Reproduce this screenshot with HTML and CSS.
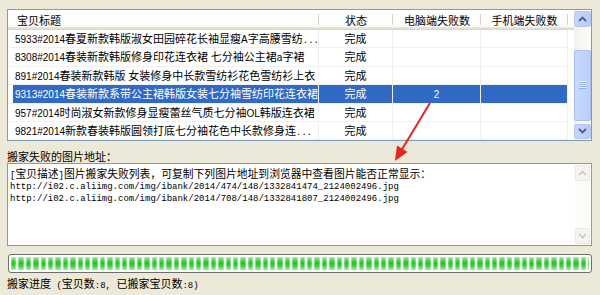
FILE: index.html
```html
<!DOCTYPE html>
<html lang="zh-CN">
<head>
    <meta charset="UTF-8">
    <meta name="viewport" content="width=device-width, initial-scale=1.0">
    <title>图片搬家</title>
    <link rel="stylesheet" href="styles.css">
</head>
<body>
<div class="window">
    <div class="list">
        <table class="grid">
            <colgroup>
                <col class="c-title">
                <col class="c-state">
                <col class="c-pc">
                <col class="c-mob">
                <col>
            </colgroup>
            <thead>
                <tr>
                    <th class="title">宝贝标题</th>
                    <th>状态</th>
                    <th>电脑端失败数</th>
                    <th>手机端失败数</th>
                    <th class="rest"></th>
                </tr>
            </thead>
            <tbody>
                <tr>
                    <td class="title"><span class="a">5933#2014</span>春夏新款韩版淑女田园碎花长袖显瘦<span class="a">A</span>字高腰雪纺<span class="m">...</span></td>
                    <td>完成</td><td></td><td></td><td class="rest"></td>
                </tr>
                <tr>
                    <td class="title"><span class="a">8308#2014</span>春装新款韩版修身印花连衣裙<span class="a"> </span>七分袖公主裙<span class="a">a</span>字裙</td>
                    <td>完成</td><td></td><td></td><td class="rest"></td>
                </tr>
                <tr>
                    <td class="title"><span class="a">891#2014</span>春装新款韩版<span class="a"> </span>女装修身中长款雪纺衫花色雪纺衫上衣</td>
                    <td>完成</td><td></td><td></td><td class="rest"></td>
                </tr>
                <tr class="sel">
                    <td class="title"><span class="a">9313#2014</span>春装新款系带公主裙韩版女装七分袖雪纺印花连衣裙</td>
                    <td>完成</td><td><span class="a">2</span></td><td></td><td class="rest"></td>
                </tr>
                <tr>
                    <td class="title"><span class="a">957#2014</span>时尚淑女新款修身显瘦蕾丝气质七分袖<span class="a">OL</span>韩版连衣裙</td>
                    <td>完成</td><td></td><td></td><td class="rest"></td>
                </tr>
                <tr>
                    <td class="title"><span class="a">9821#2014</span>新款春装韩版圆领打底七分袖花色中长款修身连<span class="m">...</span></td>
                    <td>完成</td><td></td><td></td><td class="rest"></td>
                </tr>
            </tbody>
        </table>
        <div class="vscroll">
            <div class="sbtn">
                <svg width="9" height="6" viewBox="0 0 9 6"><path d="M1 5 L4.5 1.5 L8 5" fill="none" stroke="#4d6185" stroke-width="1.8"/></svg>
            </div>
            <div class="track">
                <div class="thumb"><div class="grip"></div></div>
            </div>
            <div class="sbtn">
                <svg width="9" height="6" viewBox="0 0 9 6"><path d="M1 1 L4.5 4.5 L8 1" fill="none" stroke="#4d6185" stroke-width="1.8"/></svg>
            </div>
        </div>
    </div>

    <div class="label">搬家失败的图片地址：</div>

    <div class="memo">
        <div class="memo-text">
            <div><span class="m">[</span>宝贝描述<span class="m">]</span>图片搬家失败列表，可复制下列图片地址到浏览器中查看图片能否正常显示：</div>
            <div class="m">http://i02.c.aliimg.com/img/ibank/2014/474/148/1332841474_2124002496.jpg</div>
            <div class="m">http://i02.c.aliimg.com/img/ibank/2014/708/148/1332841807_2124002496.jpg</div>
        </div>
        <div class="vscroll off">
            <div class="sbtn">
                <svg width="9" height="6" viewBox="0 0 9 6"><path d="M1 5 L4.5 1.5 L8 5" fill="none" stroke="#c9c7ba" stroke-width="1.6"/></svg>
            </div>
            <div class="track"></div>
            <div class="sbtn">
                <svg width="9" height="6" viewBox="0 0 9 6"><path d="M1 1 L4.5 4.5 L8 1" fill="none" stroke="#c9c7ba" stroke-width="1.6"/></svg>
            </div>
        </div>
    </div>

    <div class="progress"><div class="fill"></div></div>

    <div class="status">搬家进度<span class="m"> (</span>宝贝数<span class="m">:8, </span>已搬家宝贝数<span class="m">:8)</span></div>

    <svg class="arrow" width="600" height="295" viewBox="0 0 600 295">
        <line x1="430" y1="103" x2="401" y2="151" stroke="#e3261f" stroke-width="2"/>
        <polygon points="395,161 397,145.5 407.5,152" fill="#e3261f"/>
    </svg>
</div>
</body>
</html>
```

FILE: styles.css
```css
body{
  margin: 0;
  background-color: #ece9d8;
  font: 11px "Noto Sans CJK SC", sans-serif;
  color: #000;
}

.window{
  position: relative;
  padding: 9px 8px 0 7px;
}

/* ascii bits */
.a{
  font-family: "Liberation Sans", sans-serif;
  font-size: 10px;
}
.m{
  font-family: "Liberation Mono", monospace;
  font-size: 9px;
}
span.a, span.m{
  line-height: 1;
}

.list{
  display: flex;
  box-sizing: border-box;
  height: 132px;
  border: 1px solid #7f9db9;
  background-color: #fff;
  overflow: hidden;
}

.grid{
  width: 566px;
  flex: none;
  align-self: flex-start;
  table-layout: fixed;
  border-collapse: separate;
  border-spacing: 0;
}

.c-title{ width: 311px; }
.c-state{ width: 74px; }
.c-pc{ width: 88px; }
.c-mob{ width: 87px; }

.grid th{
  position: relative;
  height: 20px;
  padding: 0;
  font-weight: normal;
  line-height: 20px;
  text-align: center;
  white-space: nowrap;
  background: linear-gradient(#fff 0, #fcfcfb 17px, #ebeadb 17px, #e2decd 19px, #d6d2c2 20px);
}

.grid th::after{
  content: "";
  position: absolute;
  right: 0;
  top: 4px;
  bottom: 5px;
  width: 1px;
  background-color: #d6d2c2;
}

.grid th.rest::after{
  display: none;
}

.grid th.title{
  text-align: left;
  padding-left: 9px;
}

.grid td{
  height: 17.4px;
  padding: 0;
  line-height: 17.4px;
  text-align: center;
  white-space: nowrap;
  overflow: hidden;
  border-right: 1px solid #f0f0f0;
  border-bottom: 1px solid #f0f0f0;
}

.grid td.title{
  text-align: left;
  padding-left: 7px;
  text-overflow: clip;
}

.grid td.rest{
  border: none;
}

.grid tr.sel td{
  background-color: #316ac5;
  color: #fff;
}

.grid tr.sel td.title{
  background: linear-gradient(90deg, #fff 5px, #316ac5 5px);
}

.grid tr.sel td.rest{
  background: #fff;
}

/* xp scrollbar */
.vscroll{
  display: flex;
  flex-direction: column;
  width: 17px;
  background: linear-gradient(90deg, #f3f1ec, #fefefb);
}

.sbtn{
  display: flex;
  align-items: center;
  justify-content: center;
  box-sizing: border-box;
  height: 17px;
  margin: 1px 0;
  border: 1px solid #b7c9f3;
  border-radius: 2px;
  background: linear-gradient(90deg, #c6d5fc, #b9cbf7);
}

.track{
  flex: 1;
  display: flex;
  flex-direction: column;
  padding: 22px 0 2px;
}

.thumb{
  display: flex;
  align-items: center;
  justify-content: center;
  box-sizing: border-box;
  height: 71px;
  border: 1px solid #a9bdf0;
  border-radius: 2px;
  background: linear-gradient(90deg, #c9d8fd, #bcd0fa);
}

.grip{
  width: 7px;
  height: 8px;
  background: repeating-linear-gradient(#eef4fe 0 1px, #8cb0f8 1px 2px);
}

.label{
  margin-top: 9px;
  line-height: 12px;
  margin-bottom: 1px;
}

.memo{
  display: flex;
  box-sizing: border-box;
  height: 83px;
  border: 1px solid #7f9db9;
  background-color: #fff;
}

.memo-text{
  flex: 1;
  padding: 3px 0 0 2px;
  font-size: 10.8px;
  line-height: 12px;
  white-space: nowrap;
}

.memo .vscroll{
  width: 15px;
  margin-right: 1px;
}

.vscroll.off{
  background: #fcfcf9;
}

.vscroll.off .sbtn{
  height: 16px;
  border-color: #ebe9e0;
  background: #f5f4ee;
}

.progress{
  box-sizing: border-box;
  height: 19px;
  margin: 8px 0 0 1px;
  padding: 2px 2px;
  border: 1px solid #6f6f6f;
  border-radius: 3px;
  background-color: #fff;
}

.fill{
  height: 100%;
  background:
    repeating-linear-gradient(90deg, rgba(255,255,255,.35) 0 1px, transparent 1px 4.4px, rgba(255,255,255,.35) 4.4px 5.4px, #eefaee 5.4px 7.4px),
    linear-gradient(#a8eaa8, #46cf46 30%, #25c225 50%, #46cf46 70%, #a8eaa8);
}

.status{
  margin-top: 4px;
  line-height: 12px;
}

.arrow{
  position: absolute;
  left: 0;
  top: 0;
  pointer-events: none;
}
```
